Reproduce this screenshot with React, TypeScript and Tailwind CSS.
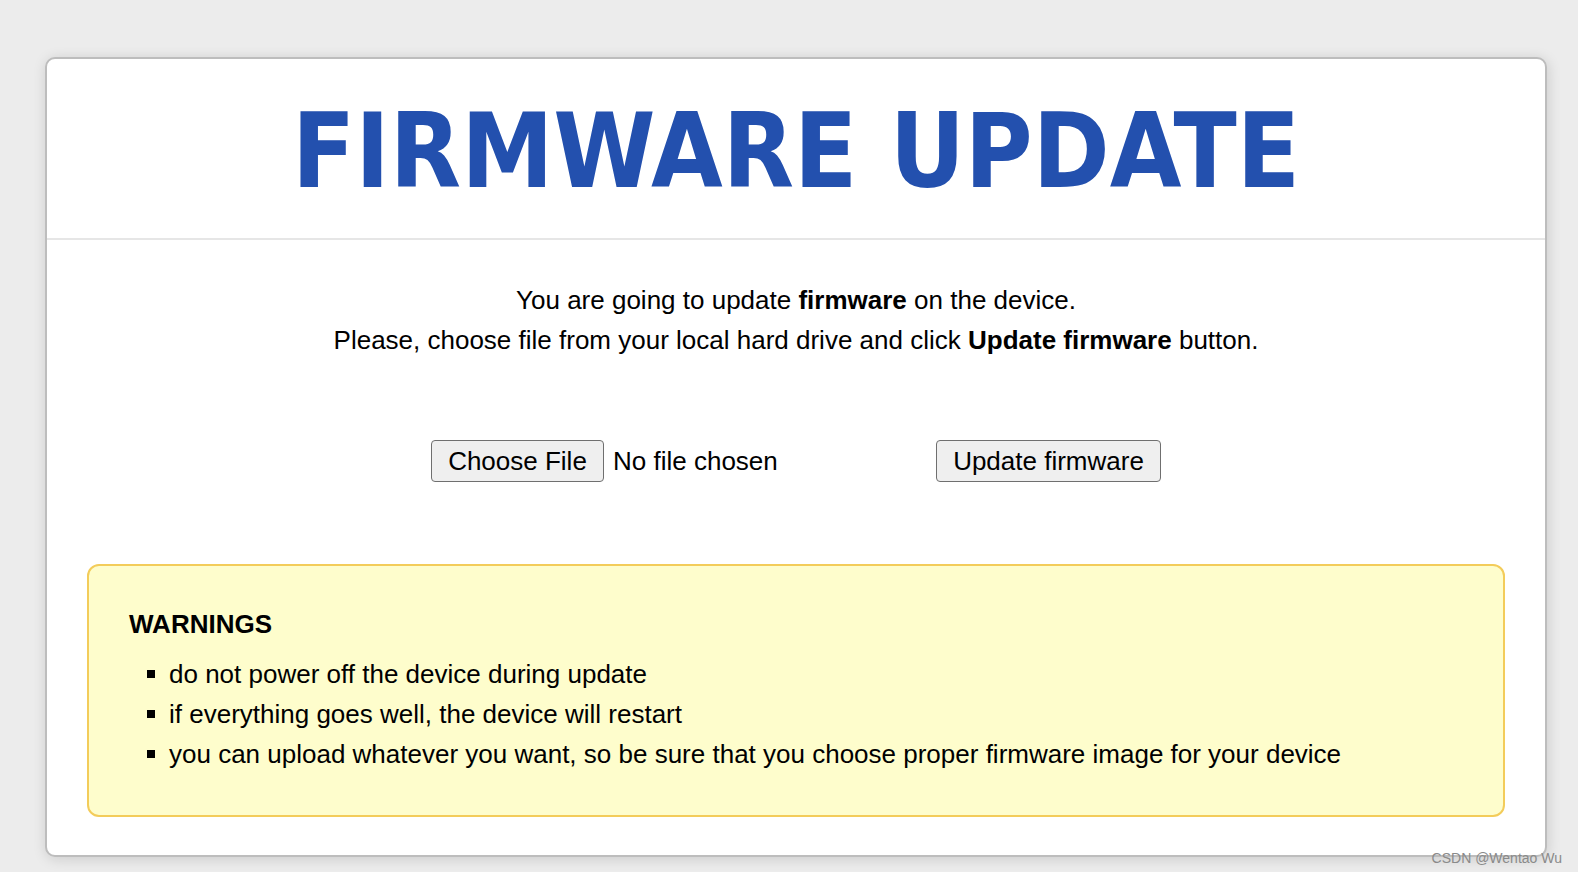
const warnings = [
  "do not power off the device during update",
  "if everything goes well, the device will restart",
  "you can upload whatever you want, so be sure that you choose proper firmware image for your device",
];

export default function App() {
  return (
    <div className="relative min-h-[872px] w-[1578px] bg-[#ececec] pl-[45px] pr-[31px] pt-[57px] font-['Liberation_Sans',Arial,sans-serif] text-black">
      <div className="h-[800px] rounded-[10px] border-2 border-[#bdbdbd] bg-white shadow-[1px_2px_14px_rgba(0,0,0,0.14)]">
        <div className="border-b-2 border-[#e6e6e6] pb-[35px] pt-[41px] text-center">
          <h1 className="font-['DejaVu_Sans_Condensed','DejaVu_Sans',Verdana,sans-serif] text-[103px] font-bold font-stretch-condensed leading-none text-[#2350ae]">
            FIRMWARE UPDATE
          </h1>
        </div>

        <div className="mt-[40px] text-center text-[26px] leading-[40px]">
          <p>
            You are going to update <b>firmware</b> on the device.
          </p>
          <p>
            Please, choose file from your local hard drive and click <b>Update firmware</b> button.
          </p>
        </div>

        <div className="mt-[80px] flex justify-center">
          <div className="flex w-[505px] items-center gap-[9px]">
            <button className="h-[42px] w-[173px] rounded-[4px] border border-[#6f6f6f] bg-[#efefef] text-[26px]">
              Choose File
            </button>
            <span className="text-[26px]">No file chosen</span>
          </div>
          <button className="h-[42px] w-[225px] rounded-[4px] border border-[#6f6f6f] bg-[#efefef] text-[26px]">
            Update firmware
          </button>
        </div>

        <div className="mx-[40px] mt-[82px] rounded-[12px] border-2 border-[#f3cc5a] bg-[#fefdcc] px-[40px] pb-[41px] pt-[42px]">
          <h2 className="text-[26px] font-bold leading-[32px]">WARNINGS</h2>
          <ul className="mt-[14px] list-none text-[26px] leading-[40px]">
            {warnings.map((w) => (
              <li key={w} className="flex items-center">
                <span className="ml-[18px] mr-[14px] h-[8px] w-[8px] bg-black" />
                {w}
              </li>
            ))}
          </ul>
        </div>
      </div>

      <span className="absolute bottom-[3px] right-[16px] text-[14px] text-[#8a8a8a]">CSDN @Wentao Wu</span>
    </div>
  );
}
